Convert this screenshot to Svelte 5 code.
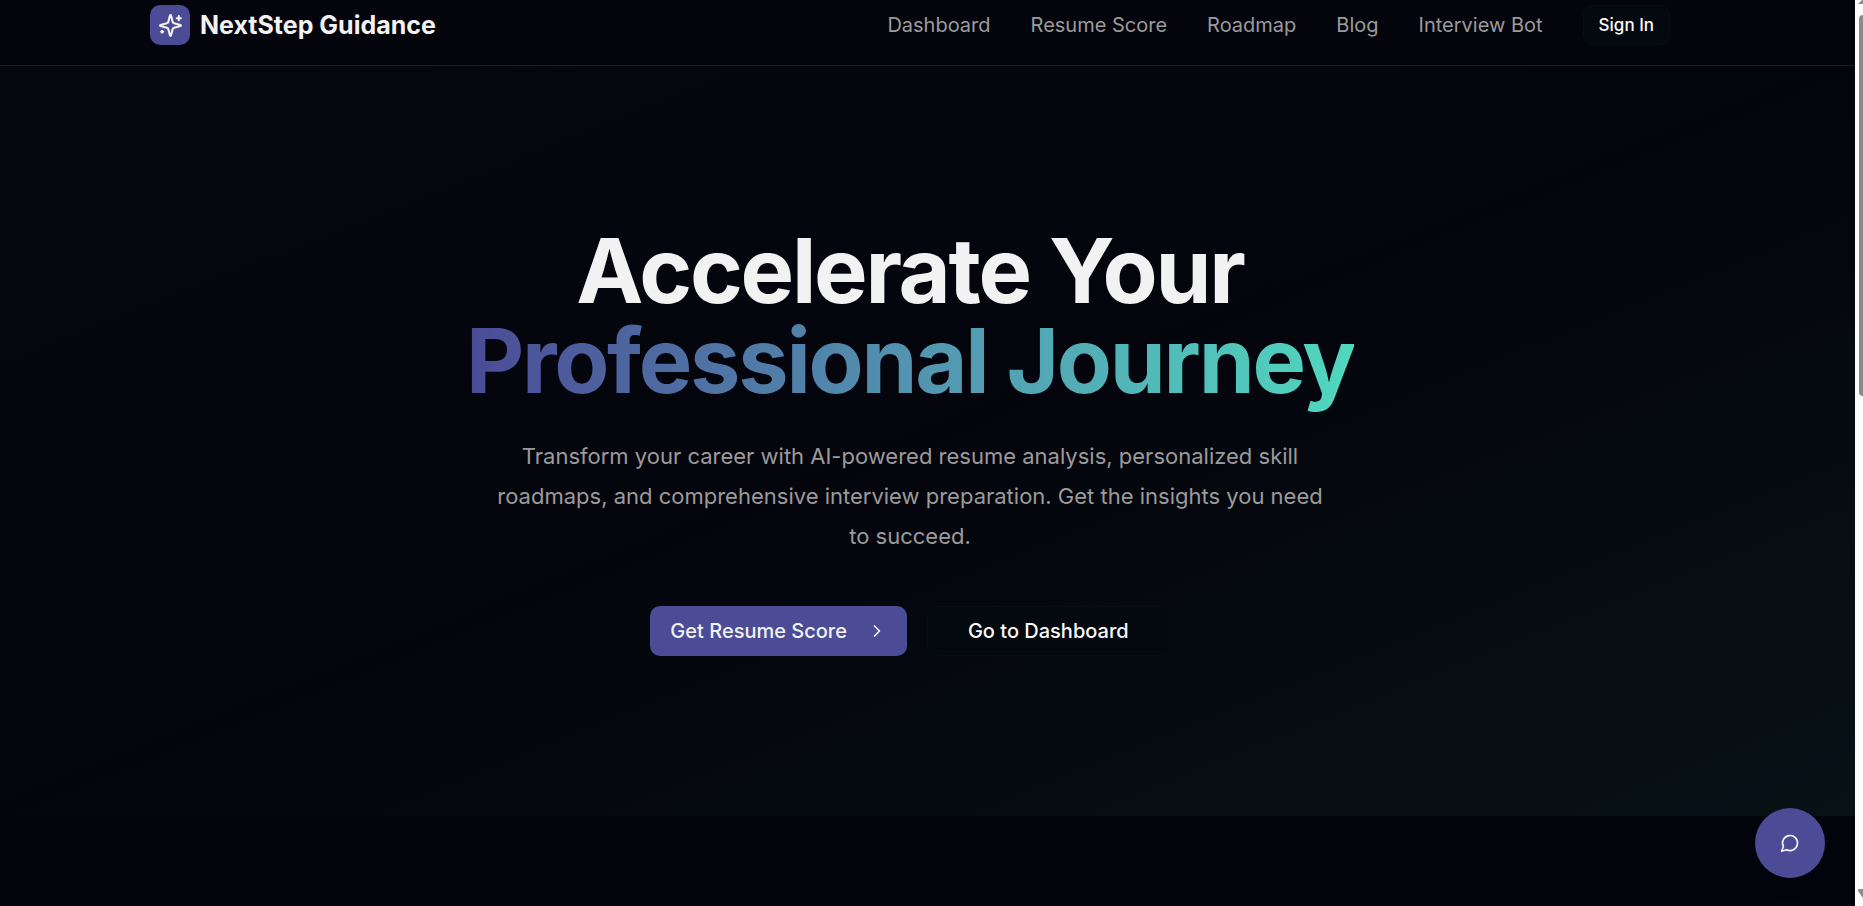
<script>
  const links = ['Dashboard', 'Resume Score', 'Roadmap', 'Blog', 'Interview Bot'];
</script>

<div class="window">
  <div class="page">
    <header>
      <div class="bar">
        <a class="brand" href="#home">
          <span class="mark">
            <svg width="25" height="25" viewBox="0 0 24 24" aria-hidden="true">
              <path d="M9.937 15.5A2 2 0 0 0 8.5 14.063l-6.135-1.582a.5.5 0 0 1 0-.962L8.5 9.936A2 2 0 0 0 9.937 8.5l1.582-6.135a.5.5 0 0 1 .963 0L14.063 8.5A2 2 0 0 0 15.5 9.937l6.135 1.581a.5.5 0 0 1 0 .964L15.5 14.063a2 2 0 0 0-1.437 1.437l-1.582 6.135a.5.5 0 0 1-.963 0z" />
              <path d="M20 3v4M22 5h-4M4 17v2M5 18H3" />
            </svg>
          </span>
          <span>NextStep Guidance</span>
        </a>
        <nav>
          {#each links as link}
            <a href="#{link.toLowerCase().replace(' ', '-')}">{link}</a>
          {/each}
          <button class="outline small">Sign In</button>
        </nav>
      </div>
    </header>

    <main>
      <section class="hero">
        <h1>Accelerate Your <span>Professional Journey</span></h1>
        <p>
          Transform your career with AI-powered resume analysis, personalized skill roadmaps, and
          comprehensive interview preparation. Get the insights you need to succeed.
        </p>
        <div class="actions">
          <button class="primary">
            Get Resume Score
            <svg width="20" height="20" viewBox="0 0 24 24" aria-hidden="true"><path d="m9 18 6-6-6-6" /></svg>
          </button>
          <button class="outline">Go to Dashboard</button>
        </div>
      </section>
    </main>

    <button class="chat" aria-label="Open chat">
      <svg width="20" height="20" viewBox="0 0 24 24" aria-hidden="true"><path d="M7.9 20A9 9 0 1 0 4 16.1L2 22Z" /></svg>
    </button>
  </div>

  <div class="track" aria-hidden="true">
    <svg width="8" height="6" viewBox="0 0 8 6"><path d="M3 4 7 0h4v4z" /></svg>
    <div class="thumb"></div>
    <svg class="down" width="8" height="10" viewBox="0 0 8 10"><path d="M3 1q0-1 1-1h8v9H8L3 2z" /></svg>
  </div>
</div>

<style>
  :global(body) {
    margin: 0;
    background: #04040c;
  }
  .window {
    display: flex;
    height: 100vh;
    overflow: hidden;
    font-family: Inter, 'Liberation Sans', sans-serif;
    color: #f2f2f2;
    background: #04040c;
  }
  .page {
    flex: 1;
    min-width: 0;
  }
  header {
    padding: 5px 35px 20px 0;
    border-bottom: 1px solid #1b1d25;
  }
  .bar {
    display: flex;
    align-items: center;
    justify-content: space-between;
    max-width: 1520px;
    margin: 0 auto;
  }
  a {
    color: inherit;
    text-decoration: none;
  }
  .brand {
    display: flex;
    align-items: center;
    gap: 10px;
    font-size: 25px;
    font-weight: 700;
    line-height: 40px;
  }
  .mark {
    display: grid;
    place-items: center;
    width: 40px;
    height: 40px;
    border-radius: 10px;
    background: #4b4b96;
  }
  svg {
    fill: none;
    stroke: currentColor;
    stroke-width: 2;
    stroke-linecap: round;
    stroke-linejoin: round;
  }
  nav {
    display: flex;
    align-items: center;
    gap: 40px;
    font-size: 20px;
    color: #9b9b9b;
  }
  button {
    display: flex;
    align-items: center;
    justify-content: center;
    box-sizing: border-box;
    border: 0;
    border-radius: 10px;
    font: 500 20px/24px Inter, 'Liberation Sans', sans-serif;
    color: #f2f2f2;
    cursor: pointer;
  }
  .outline {
    height: 50px;
    padding: 0 40px;
    border: 1px solid #060d14;
    background: #04080f;
    color: #fafafa;
  }
  .small {
    height: 40px;
    padding: 0 15px;
    font-size: 17px;
  }
  .primary {
    gap: 20px;
    height: 50px;
    padding: 0 20px;
    background: #4b4b96;
  }
  .hero {
    display: flex;
    flex-direction: column;
    align-items: center;
    padding: 160px 35px 160px 0;
    background: linear-gradient(to bottom right, #070710, #04040c 50%, #081217);
    text-align: center;
  }
  h1 {
    max-width: 1120px;
    margin: 0 0 20px;
    font-size: 90px;
    font-weight: 700;
    letter-spacing: -0.025em;
    line-height: 90px;
  }
  h1 span {
    display: block;
    padding-bottom: 10px;
    background: linear-gradient(to right, #4b4b96, #5393b0 50%, #50d8be);
    background-clip: text;
    color: transparent;
  }
  p {
    max-width: 840px;
    margin: 0 0 50px;
    font-size: 22px;
    line-height: 40px;
    color: #9b9b9b;
  }
  .actions {
    display: flex;
    gap: 20px;
  }
  .chat {
    position: fixed;
    right: 38px;
    bottom: 28px;
    width: 70px;
    height: 70px;
    border-radius: 50%;
    background: #4b4b96;
    box-shadow: 0 10px 15px rgba(0, 0, 0, 0.1);
  }
  .track {
    display: flex;
    flex-direction: column;
    gap: 9px;
    width: 8px;
    overflow: hidden;
    background: #fcfcfc;
  }
  .track path {
    fill: #8b8b8b;
    stroke: none;
  }
  .thumb {
    width: 8px;
    height: 42%;
    margin-left: 4px;
    border-radius: 6px;
    background: #8b8b8b;
  }
  .down {
    margin-top: auto;
    margin-bottom: 7px;
  }
</style>
